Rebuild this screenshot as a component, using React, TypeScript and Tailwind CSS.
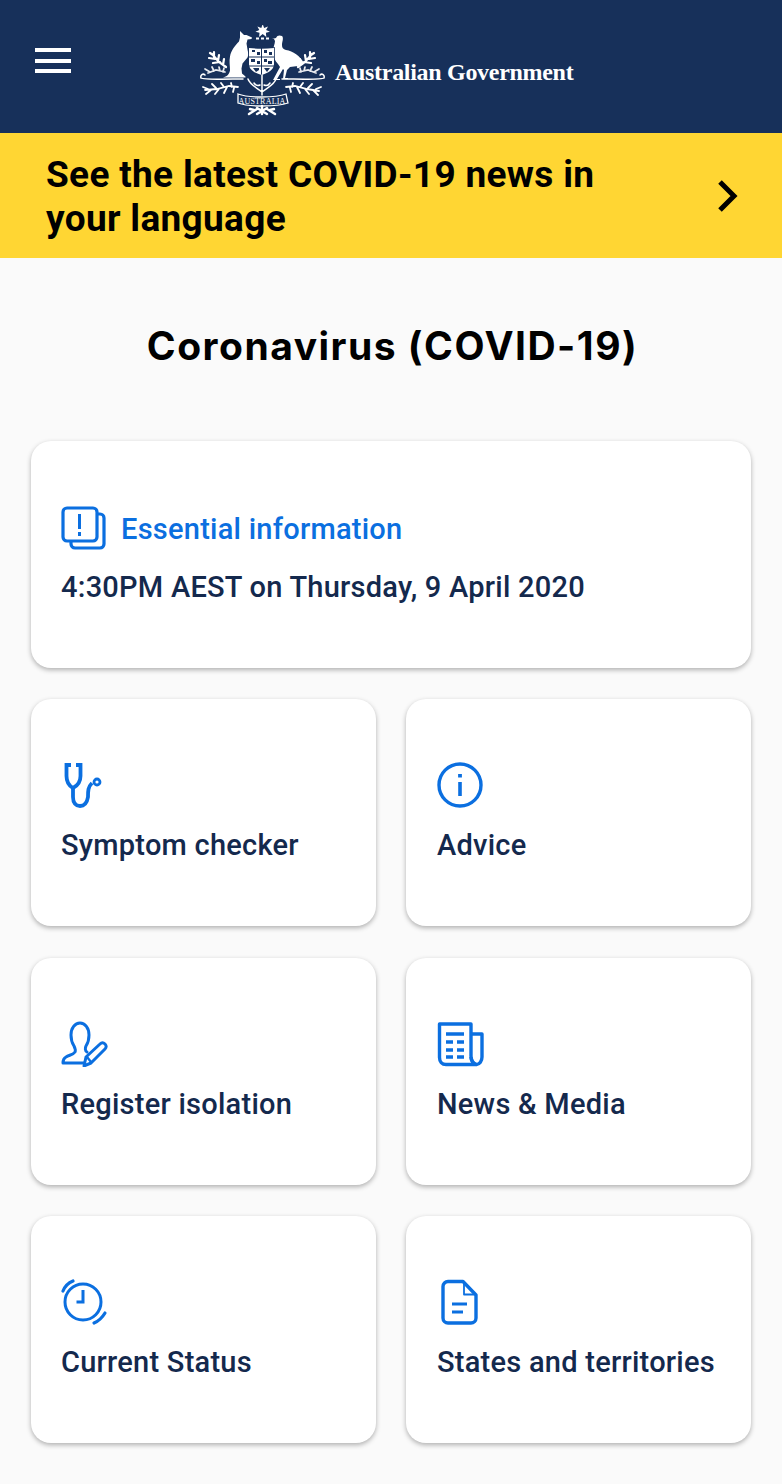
import type { ReactNode } from "react";

const Crest = () => (
  <svg width="125" height="92" viewBox="0 0 125 92" fill="none" className="shrink-0">
    {/* star and crest bar */}
    <path d="M62.700 -1l1.400 4 3.900-1.600-1.900 3.700 3.900 1.600-4.100 1 .4 4.200-3.600-2.900-3.600 2.900.4-4.200-4.100-1 3.900-1.600-1.900-3.700 3.900 1.600z" fill="#fff" />
    <path d="M56 13.500h3M61 13.500h3M66 13.500h3" stroke="#fff" strokeWidth="1.800" />
    {/* kangaroo */}
    <path
      d="M40 6l4 4 2.500 0 5.500 2.500-.5 1.500-4 .5-1 4 1 6 1 5-1 3-5 6-1 5 .5 5 3.500 3v1H23c4-1 6-3 7-7 0-5-1-9 0-14 1-6 5-11 9-15l1-4z"
      fill="#fff"
    />
    {/* emu */}
    <path
      d="M76 13c1-3 4-3 6-2 2 2 0 6 0 9 0 3 1 4 4 5 7 1 14 6 18 13l-6 3-8 1-3 3-2 8h3v1h-5l1-9-1-1-6 10h3v1h-7l7-13-2-3c-3-3-5-7-5-12 0-5 2-8 2-11l-1-2-2 0z"
      fill="#fff"
    />
    {/* shield */}
    <path d="M49 23c8 1 17 1 25 0v16c0 6-6 9-12.500 11C55 48 49 45 49 39z" fill="#fff" stroke="#17305a" strokeWidth="1.600" paintOrder="stroke" />
    <path d="M61.500 23v27M49 32h25M49 41h25" stroke="#17305a" strokeWidth="1" />
    <path
      d="M52 25h3v2h-3zM57 27h3v3h-3zM64 25h3v3h-3zM69 27h3v3h-3zM51 34h4v3h-4zM57 36h3v3h-3zM64 34h3v3h-3zM68 36h4v3h-4zM53 43h6v2l-3 2zM64 43h6l-3 4z"
      fill="#17305a"
    />
    {/* base scroll */}
    <path
      d="M1 53c2 2 30 1 42 1M124 53c-2 2-28 1-42 1M1 53c-1-3 2-5 4-3M124 53c1-3-2-5-4-3M48 54c2 6 8 8 14 13 6-5 12-7 14-13M62 50v20M54 58c2 3 4 3 6 2M70 58c-2 3-4 3-6 2"
      stroke="#fff"
      strokeWidth="1.500"
      strokeLinecap="round"
    />
    {/* upper branches */}
    <path
      d="M12 29l7 8 7 5M10 28l3 2M14 27l0 5M9 33l6 1M19 30l-1 6M13 38l7-1M24 34l-1 6M112 29l-7 8-7 5M114 28l-3 2M110 27l0 5M115 33l-6 1M105 30l1 6M111 38l-7-1M100 34l1 6"
      stroke="#fff"
      strokeWidth="2.200"
      strokeLinecap="round"
    />
    {/* side sprays */}
    <path
      d="M8 48l8-3 9 2M5 44l5 3M12 42l2 4M19 42l1 4M24 43l-1 4M116 48l-8-3-9 2M119 44l-5 3M112 42l-2 4M105 42l-1 4M100 43l1 4"
      stroke="#fff"
      strokeWidth="1.700"
      strokeLinecap="round"
      opacity="0.900"
    />
    {/* lower branches */}
    <path
      d="M5 65l12-1 12-3 9 1M3 62l5 2M6 69l5-4M12 59l4 4M15 69l4-5M21 58l3 4M24 68l3-6M31 58l1 4M33 67l1-4M119 66l-12-2-12-3-9 1M121 62l-5 2M118 70l-5-5M112 59l-4 4M109 69l-4-5M103 58l-3 4M100 68l-3-6M93 58l-1 4M91 67l-1-4"
      stroke="#fff"
      strokeWidth="1.800"
      strokeLinecap="round"
    />
    {/* ribbon */}
    <path d="M38 69c8 3 16 3 24 3s16 0 24-3l2 9c-8 3-17 3-26 3s-16 0-24-3z" stroke="#fff" strokeWidth="1.300" />
    <text x="62" y="79" textAnchor="middle" fill="#fff" fontSize="8" fontFamily="Liberation Serif, serif" letterSpacing="0.200">
      AUSTRALIA
    </text>
    {/* flower */}
    <path d="M49 89l8-5M75 89l-8-5M62 81v8M57 83l10 6M67 83l-10 6M54 85l-4-1M70 85l4-1" stroke="#fff" strokeWidth="2.400" strokeLinecap="round" />
  </svg>
);

const EssentialIcon = () => (
  <svg width="50" height="46" viewBox="0 0 50 46" fill="none" stroke="#0b6fe0" strokeWidth="3.200" strokeLinejoin="round">
    <rect x="2" y="2" width="34" height="33" rx="4" />
    <path d="M36 8h3a4 4 0 0 1 4 4v26a4 4 0 0 1-4 4H14a4 4 0 0 1-4-4v-3" />
    <path d="M18.500 8v15M18.500 26v4" strokeWidth="3" />
  </svg>
);

const StethoscopeIcon = () => (
  <svg width="46" height="46" viewBox="0 0 46 46" fill="none" stroke="#0b6fe0" strokeWidth="3.800" strokeLinecap="butt">
    <path d="M10 3H5.500v11c0 6 3 10 6.500 12 4-2 7.500-6 7.500-12V3H15" />
    <path d="M12 26v9c0 6 3 9 7 9s7-3 8-9c0-6 0-10 4-14" />
    <circle cx="36" cy="20" r="3" strokeWidth="2.800" />
  </svg>
);

const InfoIcon = () => (
  <svg width="46" height="46" viewBox="0 0 46 46" fill="none" stroke="#0b6fe0" strokeWidth="3.400">
    <circle cx="23" cy="23" r="21" />
    <path d="M23 20v14" strokeWidth="3.600" />
    <path d="M23 12v3.500" strokeWidth="3.800" />
  </svg>
);

const PersonPenIcon = () => (
  <svg width="48" height="46" viewBox="0 0 48 46" fill="none" stroke="#0b6fe0" strokeWidth="3" strokeLinejoin="round" strokeLinecap="round">
    <path d="M23 42H2c0-3 1-5 3-6 3-2 7-2 9-5 1-2 0-4-1-6-2-3-3-6-3-11 0-7 4-12 9-12s9 5 9 12c0 5-1 8-3 11-1 2-1 5 1 6" />
    <path d="M23 45l2-9L39 23c2-2 4-1 5 0s2 3 0 5L30 42z" />
    <path d="M26 36l4 5" strokeWidth="2.400" />
  </svg>
);

const NewsIcon = () => (
  <svg width="47" height="46" viewBox="0 0 47 46" fill="none" stroke="#0b6fe0" strokeWidth="3.400" strokeLinejoin="round">
    <path d="M2.500 3H34v32c0 4 2 7 5 8.500H9c-4 0-6.500-3-6.500-7z" />
    <path d="M34 13h11v23c0 4-2.500 7.500-5.500 7.500S34 40 34 36" />
    <path d="M9 13h18M9 21h7M20 21h7M9 29h7M20 29h7M9 36h7M20 36h7" strokeWidth="3.600" />
  </svg>
);

const ClockIcon = () => (
  <svg width="48" height="48" viewBox="0 0 48 48" fill="none" stroke="#0b6fe0" strokeWidth="3" strokeLinecap="round">
    <circle cx="22" cy="24" r="18" />
    <path d="M22 12v12h-6.500" strokeLinecap="butt" />
    <path d="M2 13C4 8 7 5 12 3" strokeWidth="3.200" />
    <path d="M33 45c5-2 8-5 11-10" strokeWidth="3.200" />
  </svg>
);

const DocumentIcon = () => (
  <svg width="44" height="48" viewBox="-3 0 44 48" fill="none" stroke="#0b6fe0" strokeWidth="3.400" strokeLinejoin="round">
    <path d="M8 3.500h15L36 17v23a5 5 0 0 1-5 5H8a5 5 0 0 1-5-5V8.500a5 5 0 0 1 5-5z" />
    <path d="M24 4v12.500h12" strokeWidth="1.800" />
    <path d="M12 26h15M12 34h11" strokeWidth="3.200" />
  </svg>
);

const Card = ({ icon, label }: { icon: ReactNode; label: string }) => (
  <div className="h-[227px] rounded-[20px] bg-white pt-[61px] shadow-[0_2px_5px_rgba(0,0,0,0.3)] odd:pl-[30px] even:pl-[31px]">
    <div className="flex h-[50px] items-center">{icon}</div>
    <div className="mt-[15px] text-[29px] font-medium leading-[40px] tracking-[0.25px] text-[#14294d]">{label}</div>
  </div>
);

export default function App() {
  return (
    <div className="h-[1484px] w-[782px] overflow-hidden bg-[#fafafa] font-['Roboto',sans-serif]">
      <header className="flex h-[133px] items-start bg-[#17305a] text-white">
        <div className="ml-[35px] mt-[48px] flex w-[36px] flex-col gap-[6.500px]">
          <div className="h-[4px] bg-white" />
          <div className="h-[4px] bg-white" />
          <div className="h-[4px] bg-white" />
        </div>
        <div className="ml-[129px] mt-[25px]">
          <Crest />
        </div>
        <div className="ml-[10px] mt-[57px] font-['Liberation_Serif',serif] text-[24px] font-bold leading-[30px] tracking-[-0.3px]">
          Australian Government
        </div>
      </header>

      <div className="flex h-[125px] items-center justify-between bg-[#ffd633] pl-[46px] pr-[43px]">
        <div className="mt-[3px] w-[590px] text-[37px] font-bold leading-[44px] tracking-[0.32px] text-black">
          See the latest COVID-19 news in your language
        </div>
        <svg width="22" height="34" viewBox="0 0 22 34" fill="none" stroke="#000" strokeWidth="5">
          <path d="M3 3l14 14L3 31" />
        </svg>
      </div>

      <h1 className="mt-[62px] pl-[3px] text-center font-['Inter',sans-serif] text-[39px] font-bold leading-[52px] tracking-[1.500px] text-black">
        Coronavirus (COVID-19)
      </h1>

      <main className="mt-[69px] flex flex-col gap-[31px] px-[31px]">
        <div className="h-[227px] rounded-[20px] bg-white pl-[30px] pt-[65px] shadow-[0_2px_5px_rgba(0,0,0,0.3)]">
          <div className="flex items-center gap-[11px]">
            <EssentialIcon />
            <span className="-ml-[1px] text-[29px] font-medium leading-[40px] tracking-[0.25px] text-[#0b6fe0]">Essential information</span>
          </div>
          <div className="mt-[15px] text-[29px] font-medium leading-[40px] tracking-[0.25px] text-[#14294d]">
            4:30PM AEST on Thursday, 9 April 2020
          </div>
        </div>
        <div className="grid grid-cols-2 gap-x-[30px] gap-y-[31.500px]">
          <Card icon={<StethoscopeIcon />} label="Symptom checker" />
          <Card icon={<InfoIcon />} label="Advice" />
          <Card icon={<PersonPenIcon />} label="Register isolation" />
          <Card icon={<NewsIcon />} label="News & Media" />
          <Card icon={<ClockIcon />} label="Current Status" />
          <Card icon={<DocumentIcon />} label="States and territories" />
        </div>
      </main>
    </div>
  );
}
